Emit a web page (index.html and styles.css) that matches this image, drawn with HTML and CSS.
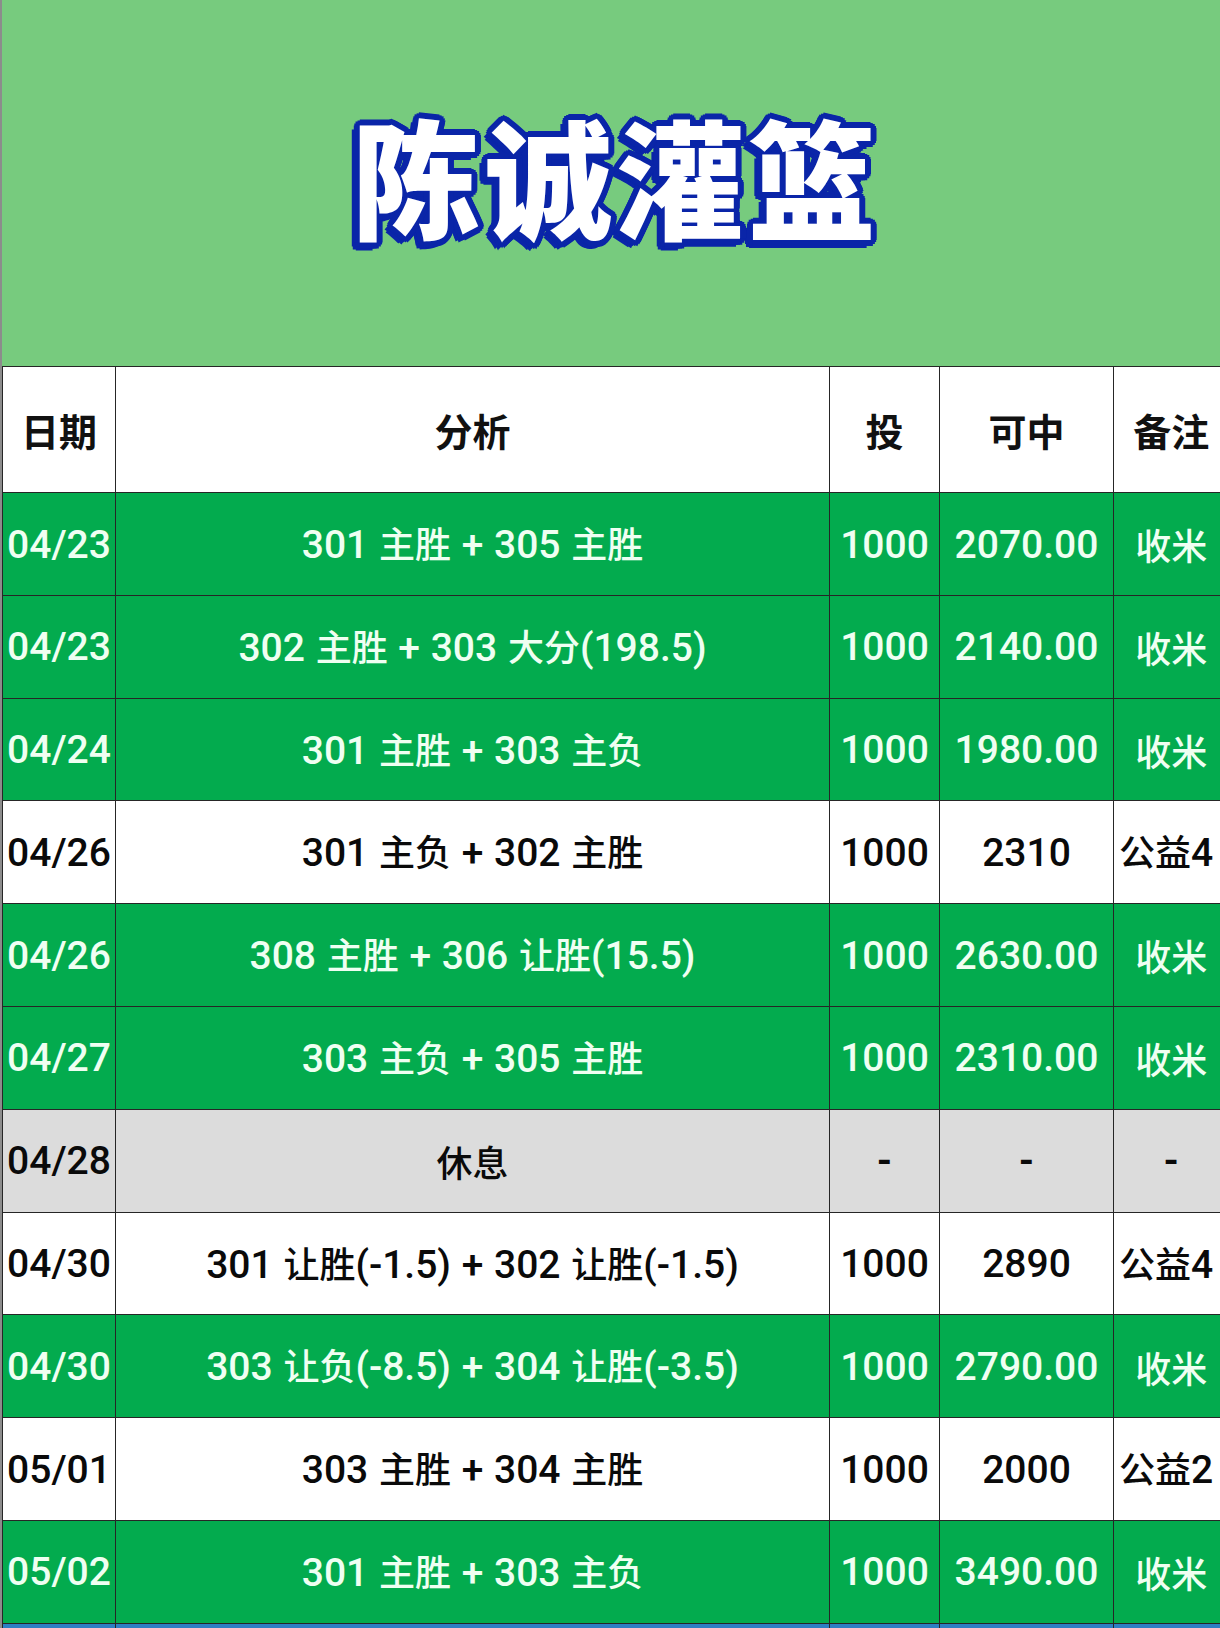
FILE: index.html
```html
<!DOCTYPE html>
<html lang="zh-CN">
<head>
<meta charset="utf-8">
<title>陈诚灌篮</title>
<link rel="stylesheet" href="styles.css">
</head>
<body>
<div class="page">
  <header class="banner">
    <h1 class="title">陈诚灌篮</h1>
  </header>
  <table class="sheet">
    <colgroup>
      <col class="c-date"><col class="c-ana"><col class="c-bet"><col class="c-win"><col class="c-note">
    </colgroup>
    <thead>
      <tr class="head">
        <th>日期</th><th>分析</th><th>投</th><th>可中</th><th>备注</th>
      </tr>
    </thead>
    <tbody>
      <tr class="g"><td>04/23</td><td>301 <span class="zh">主胜</span> + 305 <span class="zh">主胜</span></td><td>1000</td><td>2070.00</td><td class="zh">收米</td></tr>
      <tr class="g"><td>04/23</td><td>302 <span class="zh">主胜</span> + 303 <span class="zh">大分</span>(198.5)</td><td>1000</td><td>2140.00</td><td class="zh">收米</td></tr>
      <tr class="g"><td>04/24</td><td>301 <span class="zh">主胜</span> + 303 <span class="zh">主负</span></td><td>1000</td><td>1980.00</td><td class="zh">收米</td></tr>
      <tr class="w"><td>04/26</td><td>301 <span class="zh">主负</span> + 302 <span class="zh">主胜</span></td><td>1000</td><td>2310</td><td class="clip"><span class="zh">公益</span>4</td></tr>
      <tr class="g"><td>04/26</td><td>308 <span class="zh">主胜</span> + 306 <span class="zh">让胜</span>(15.5)</td><td>1000</td><td>2630.00</td><td class="zh">收米</td></tr>
      <tr class="g"><td>04/27</td><td>303 <span class="zh">主负</span> + 305 <span class="zh">主胜</span></td><td>1000</td><td>2310.00</td><td class="zh">收米</td></tr>
      <tr class="r"><td>04/28</td><td class="zh">休息</td><td class="dash">-</td><td class="dash">-</td><td class="dash">-</td></tr>
      <tr class="w"><td>04/30</td><td>301 <span class="zh">让胜</span>(-1.5) + 302 <span class="zh">让胜</span>(-1.5)</td><td>1000</td><td>2890</td><td class="clip"><span class="zh">公益</span>4</td></tr>
      <tr class="g"><td>04/30</td><td>303 <span class="zh">让负</span>(-8.5) + 304 <span class="zh">让胜</span>(-3.5)</td><td>1000</td><td>2790.00</td><td class="zh">收米</td></tr>
      <tr class="w"><td>05/01</td><td>303 <span class="zh">主胜</span> + 304 <span class="zh">主胜</span></td><td>1000</td><td>2000</td><td class="clip"><span class="zh">公益</span>2</td></tr>
      <tr class="g"><td>05/02</td><td>301 <span class="zh">主胜</span> + 303 <span class="zh">主负</span></td><td>1000</td><td>3490.00</td><td class="zh">收米</td></tr>
      <tr class="b"><td></td><td></td><td></td><td></td><td></td></tr>
    </tbody>
  </table>
</div>
</body>
</html>
```
FILE: styles.css
```css
html, body {
  margin: 0;
  padding: 0;
  background: #ffffff;
}
body {
  width: 1220px;
  height: 1628px;
  overflow: hidden;
  font-family: Roboto, "Noto Sans CJK SC", sans-serif;
}
.page {
  width: 1220px;
  border-left: 2px solid #8c8c8c;
  box-sizing: border-box;
}
.banner {
  height: 366px;
  background: #77cb7e;
  display: flex;
  align-items: center;
  justify-content: center;
}
.title {
  margin: 0 0 0 10px;
  padding-bottom: 16px;
  font-family: "Noto Sans CJK SC", sans-serif;
  font-weight: 900;
  font-size: 128px;
  line-height: 1;
  letter-spacing: 4px;
  color: #ffffff;
  text-shadow:
    6px 0 0 #0a25a8, -6px 0 0 #0a25a8, 0 6px 0 #0a25a8, 0 -6px 0 #0a25a8,
    4.3px 4.3px 0 #0a25a8, -4.3px 4.3px 0 #0a25a8, 4.3px -4.3px 0 #0a25a8, -4.3px -4.3px 0 #0a25a8,
    5.5px 2.3px 0 #0a25a8, -5.5px 2.3px 0 #0a25a8, 5.5px -2.3px 0 #0a25a8, -5.5px -2.3px 0 #0a25a8,
    2.3px 5.5px 0 #0a25a8, -2.3px 5.5px 0 #0a25a8, 2.3px -5.5px 0 #0a25a8, -2.3px -5.5px 0 #0a25a8,
    -7px 7px 0 #0a25a8, -8px 4px 0 #0a25a8, -4px 8px 0 #0a25a8;
}
.sheet {
  border-collapse: collapse;
  table-layout: fixed;
  width: 1226px;
  font-size: 39px;
  font-weight: 500;
  line-height: 1.2;
  word-spacing: 1px;
}
.zh {
  font-family: "Noto Sans CJK SC", sans-serif;
  font-size: 36px;
}
.c-date { width: 113px; }
.c-ana { width: 714px; }
.c-bet { width: 110px; }
.c-win { width: 174px; }
.c-note { width: 115px; }
.sheet th, .sheet td {
  border: 1.5px solid #262626;
  text-align: center;
  vertical-align: middle;
  padding: 0;
  white-space: nowrap;
  overflow: hidden;
}
.sheet td:last-child, .sheet th:last-child {
  border-right: none;
}
.head th {
  height: 125px;
  background: #ffffff;
  color: #111111;
  font-family: "Noto Sans CJK SC", sans-serif;
  font-weight: 700;
  font-size: 38px;
}
.sheet tbody td {
  height: 99.8px;
  padding-top: 2px;
}
.sheet td.clip {
  text-align: left;
  padding-left: 5px;
  word-spacing: 0;
}
.sheet td.dash {
  font-weight: 700;
}
.g td {
  background: #03ab4e;
  color: #effff2;
}
.w td {
  background: #ffffff;
  color: #0a0a0a;
}
.r td {
  background: #dcdcdc;
  color: #0a0a0a;
}
.b td {
  background: #2c7fc4;
  height: 20px;
}
```
